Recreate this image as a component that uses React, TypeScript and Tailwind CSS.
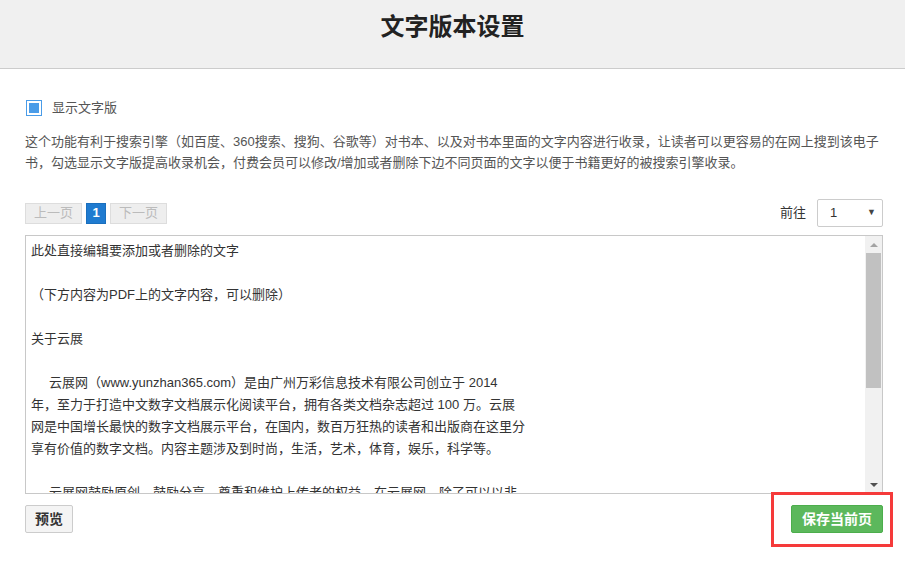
import React, { useState } from 'react';

const lines: { text: string; indent?: boolean }[] = [
    { text: '此处直接编辑要添加或者删除的文字' },
    { text: '' },
    { text: '（下方内容为PDF上的文字内容，可以删除）' },
    { text: '' },
    { text: '关于云展' },
    { text: '' },
    { text: '云展网（www.yunzhan365.com）是由广州万彩信息技术有限公司创立于 2014', indent: true },
    { text: '年，至力于打造中文数字文档展示化阅读平台，拥有各类文档杂志超过 100 万。云展' },
    { text: '网是中国增长最快的数字文档展示平台，在国内，数百万狂热的读者和出版商在这里分' },
    { text: '享有价值的数字文档。内容主题涉及到时尚，生活，艺术，体育，娱乐，科学等。' },
    { text: '' },
    { text: '云展网鼓励原创，鼓励分享，尊重和维护上传者的权益，在云展网，除了可以以非', indent: true },
];

export default function App() {
    const [showText, setShowText] = useState(true);

    return (
        <div className="w-[905px] h-[567px] bg-white overflow-hidden font-['Liberation_Sans','Noto_Sans_CJK_SC',sans-serif] text-[13px]">
            {/* header */}
            <div className="h-[69px] bg-[#f0f0f0] border-b border-[#cccccc] flex justify-center pt-[11px]">
                <h1 className="text-[24px] leading-[32px] font-bold text-[#222222]">文字版本设置</h1>
            </div>

            <div className="pl-[25px] pr-[22px]">
                {/* checkbox */}
                <label className="mt-[31px] flex items-center gap-[10px] cursor-pointer">
                    <span
                        onClick={() => setShowText(!showText)}
                        className="ml-[1px] w-[16px] h-[16px] border border-[#4a9ce8] bg-white flex items-center justify-center"
                    >
                        {showText && <span className="w-[10px] h-[10px] bg-[#4a9ce8]" />}
                    </span>
                    <span className="text-[#555555] leading-[16px]">显示文字版</span>
                </label>

                <p className="mt-[15px] text-[#555555] leading-[21px]">
                    这个功能有利于搜索引擎（如百度、360搜索、搜狗、谷歌等）对书本、以及对书本里面的文字内容进行收录，让读者可以更容易的在网上搜到该电子书，勾选显示文字版提高收录机会，付费会员可以修改/增加或者删除下边不同页面的文字以便于书籍更好的被搜索引擎收录。
                </p>

                {/* pagination */}
                <div className="mt-[26px] h-[28px] flex items-center justify-between">
                    <div className="flex items-center gap-[4px]">
                        <span className="w-[57px] h-[21px] bg-[#eeeeee] border border-[#dddddd] text-[#bbbbbb] flex items-center justify-center">上一页</span>
                        <span className="w-[20px] h-[21px] bg-[#1f7bd0] border border-[#1a6fbd] text-white font-bold flex items-center justify-center">1</span>
                        <span className="w-[57px] h-[21px] bg-[#eeeeee] border border-[#dddddd] text-[#bbbbbb] flex items-center justify-center">下一页</span>
                    </div>
                    <div className="flex items-center">
                        <span className="text-[#333333] mr-[11px]">前往</span>
                        <div className="w-[66px] h-[28px] border border-[#cccccc] rounded-[2px] flex items-center justify-between pl-[12px] pr-[6px] text-[#333333]">
                            <span>1</span>
                            <span className="text-[9px] text-[#444444]">▼</span>
                        </div>
                    </div>
                </div>

                {/* text area */}
                <div className="mt-[8px] h-[259px] border border-[#c8c8c8] flex">
                    <div className="flex-1 overflow-hidden pl-[5px] pt-[4px] text-[#333333] leading-[22px]">
                        {lines.map((l, i) => (
                            <div key={i} className={`h-[22px] whitespace-nowrap ${l.indent ? 'pl-[18px]' : ''}`}>
                                {l.text}
                            </div>
                        ))}
                    </div>
                    <div className="w-[17px] bg-[#f1f1f1] flex flex-col">
                        <div className="h-[17px] flex items-center justify-center">
                            <span className="w-0 h-0 border-l-[4px] border-r-[4px] border-b-[4px] border-l-transparent border-r-transparent border-b-[#a3a3a3]" />
                        </div>
                        <div className="mx-[1px] h-[135px] bg-[#c1c1c1]" />
                        <div className="flex-1" />
                        <div className="h-[17px] flex items-center justify-center">
                            <span className="w-0 h-0 border-l-[4px] border-r-[4px] border-t-[4px] border-l-transparent border-r-transparent border-t-[#505050]" />
                        </div>
                    </div>
                </div>

                {/* bottom buttons */}
                <div className="mt-[11px] flex items-center justify-between">
                    <button className="w-[48px] h-[28px] bg-[#f4f4f4] border border-[#cccccc] rounded-[2px] text-[14px] font-bold text-[#333333]">
                        预览
                    </button>
                    <div className="relative">
                        <button className="w-[92px] h-[28px] bg-[#5cb85c] border border-[#4cae4c] rounded-[2px] text-[14px] font-bold text-white">
                            保存当前页
                        </button>
                        <div className="absolute -left-[20px] -right-[10px] -top-[13px] -bottom-[14px] border-[3px] border-[#f53a3a] pointer-events-none" />
                    </div>
                </div>
            </div>
        </div>
    );
}
